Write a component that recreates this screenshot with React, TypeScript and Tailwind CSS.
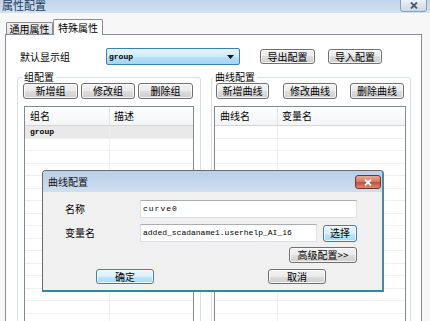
import React from 'react';

const mono = "font-['Liberation_Mono',monospace]";

function Btn({ label, w, h = 'h-[16px]', focus = false }: { label: string; w: string; h?: string; focus?: boolean }) {
  return (
    <div
      className={`${w} ${h} shrink-0 flex items-center justify-center rounded-[3px] border text-[10px] leading-none shadow-[inset_0_0_0_1px_rgba(255,255,255,0.75)] ${
        focus
          ? 'border-[#3c7fb1] bg-[linear-gradient(#eaf6fd,#d9f0fc_50%,#bee6fd_50%,#a7d9f5)]'
          : 'border-[#707070] bg-[linear-gradient(#f2f2f2,#ebebeb_50%,#dddddd_50%,#cfcfcf)]'
      }`}
    >
      {label}
    </div>
  );
}

function Table({ width, col, head1, head2, first }: { width: string; col: string; head1: string; head2: string; first?: string }) {
  const rows = Array.from({ length: 16 });
  return (
    <div className={`${width} h-[230px] overflow-hidden border border-[#828790] bg-white`}>
      <div className="flex h-[19px] border-b border-[#d5d5d5] bg-[linear-gradient(#ffffff,#f3f4f6)]">
        <div className={`${col} flex items-center border-r border-[#e5e5e5] pl-[5px]`}>{head1}</div>
        <div className="flex items-center pl-[4px]">{head2}</div>
      </div>
      {rows.map((_, i) => (
        <div key={i} className={`flex h-[12.5px] border-b border-[#f0f0f0] ${i === 0 && first ? 'bg-[#e9e9e9]' : ''}`}>
          <div className={`${col} flex items-center border-r border-[#f0f0f0] pl-[5px]`}>
            {i === 0 && first ? <span className={`${mono} text-[8px] font-bold`}>{first}</span> : null}
          </div>
        </div>
      ))}
    </div>
  );
}

function XIcon({ color, size = 8 }: { color: string; size?: number }) {
  return (
    <svg width={size} height={size - 1} viewBox="0 0 8 7">
      <path d="M1 0.5L7 6.5M7 0.5L1 6.5" stroke={color} strokeWidth="1.8" />
    </svg>
  );
}

export default function App() {
  return (
    <div className="relative w-[430px] h-[321px] overflow-hidden bg-[#f7f7f7] font-['Noto_Sans_CJK_SC',sans-serif] text-[10px] leading-none text-black">
      {/* window title */}
      <div className="flex h-[13px] items-start justify-between bg-[linear-gradient(#c0d4ea,#d4e2f1)]">
        <span className="ml-[2px] -mt-[1px] text-[11px] leading-[12px] text-[#1e3a5a]">属性配置</span>
        <div className="mr-[3px] -mt-[2px] flex h-[14px] w-[27px] items-center justify-center rounded-b-[3px] border border-[#8d9db2] bg-[linear-gradient(#eef3f9,#cbd8e7)]">
          <XIcon color="#4a5a70" />
        </div>
      </div>

      <div className="pl-[5px]">
        {/* tabs */}
        <div className="flex h-[21px] items-end pl-[1px]">
          <div className="flex h-[12px] w-[47px] items-center justify-center rounded-t-[2px] border border-b-0 border-[#898c95] bg-[linear-gradient(#f2f2f2,#e0e0e0)]">
            通用属性
          </div>
          <div className="relative z-10 -mb-px flex h-[16px] w-[50px] items-start justify-center rounded-t-[2px] border border-b-0 border-[#898c95] bg-white pt-[3px]">
            特殊属性
          </div>
        </div>

        {/* tab page */}
        <div className="h-[300px] w-[417px] border border-[#898c95] bg-white">
          <div className="mt-[13px] flex h-[17px] items-center pl-[14px]">
            <div className="w-[86px]">默认显示组</div>
            <div className="flex h-[17px] w-[134px] items-center justify-between rounded-[2px] border border-[#3c7fb1] bg-[linear-gradient(#e4f3fc,#cfeafb_50%,#b6e0fa_50%,#a4d6f4)] pl-[2px] pr-[5px]">
              <span className={`${mono} text-[8px] font-bold`}>group</span>
              <svg width="7" height="4" viewBox="0 0 7 4">
                <path d="M0 0H7L3.5 4Z" fill="#111" />
              </svg>
            </div>
            <div className="ml-[20px]">
              <Btn label="导出配置" w="w-[55px]" h="h-[15px]" />
            </div>
            <div className="ml-[13px]">
              <Btn label="导入配置" w="w-[54px]" h="h-[15px]" />
            </div>
          </div>

          <div className="mt-[7px] flex">
            <fieldset className="ml-[11px] h-[260px] w-[184px] rounded-[3px] border border-[#d5dfe5]">
              <legend className="ml-[4px] px-[2px] leading-[10px]">组配置</legend>
              <div className="mt-[1px] flex gap-[3px] pl-[5px]">
                <Btn label="新增组" w="w-[55px]" />
                <Btn label="修改组" w="w-[54px]" />
                <Btn label="删除组" w="w-[55px]" />
              </div>
              <div className="mt-[7px] ml-[6px]">
                <Table width="w-[170px]" col="w-[85px]" head1="组名" head2="描述" first="group" />
              </div>
            </fieldset>

            <fieldset className="ml-[10px] h-[260px] w-[200px] rounded-[3px] border border-[#d5dfe5]">
              <legend className="ml-[1px] px-[2px] leading-[10px]">曲线配置</legend>
              <div className="mt-[1px] flex pl-[4px]">
                <Btn label="新增曲线" w="w-[53px]" />
                <div className="ml-[14px]">
                  <Btn label="修改曲线" w="w-[54px]" />
                </div>
                <div className="ml-[13px]">
                  <Btn label="删除曲线" w="w-[54px]" />
                </div>
              </div>
              <div className="mt-[7px] ml-[2px]">
                <Table width="w-[192px]" col="w-[63px]" head1="曲线名" head2="变量名" />
              </div>
            </fieldset>
          </div>
        </div>
      </div>

      {/* curve dialog */}
      <div className="absolute left-[42px] top-[170px] z-20 flex h-[122px] w-[342px] flex-col rounded-t-[4px] border-l border-t border-r-2 border-b-2 border-l-[#6b6b6b] border-t-[#6b6b6b] border-r-[#4b8aa6] border-b-[#2f8a9c] bg-[#f0f0f0]">
        <div className="flex h-[21px] shrink-0 items-start justify-between rounded-t-[3px] bg-[linear-gradient(#b9d0e9,#cfdef0)]">
          <span className="mt-[6px] ml-[5px] text-[10px] text-[#111]">曲线配置</span>
          <div className="mt-[4px] mr-[1px] flex h-[14px] w-[26px] items-center justify-center rounded-[3px] border border-[#7a3328] bg-[linear-gradient(#e9a898,#d3745f_50%,#c24b37_50%,#d98a74)]">
            <XIcon color="#ffffff" />
          </div>
        </div>

        <div className="pl-[22px] pt-[8px]">
          <div className="flex h-[18px] items-center">
            <div className="w-[75px]">名称</div>
            <div className="flex h-[18px] w-[217px] items-center border border-[#dbdfe6] border-t-[#abadb3] bg-white pl-[2px]">
              <span className={`${mono} text-[8px] tracking-[1px]`}>curve0</span>
            </div>
          </div>
          <div className="mt-[6px] flex h-[18px] items-center">
            <div className="w-[75px]">变量名</div>
            <div className="flex h-[18px] w-[177px] items-center border border-[#dbdfe6] border-t-[#abadb3] bg-white pl-[2px]">
              <span className={`${mono} text-[8px]`}>added_scadaname1.userhelp_AI_16</span>
            </div>
            <div className="ml-[6px]">
              <Btn label="选择" w="w-[34px]" h="h-[17px]" focus />
            </div>
          </div>
          <div className="mt-[5px] flex pl-[224px]">
            <Btn label="高级配置>>" w="w-[68px]" />
          </div>
          <div className="mt-[6px] flex">
            <div className="ml-[31px]">
              <Btn label="确定" w="w-[58px]" h="h-[15px]" focus />
            </div>
            <div className="ml-[114px]">
              <Btn label="取消" w="w-[58px]" h="h-[15px]" />
            </div>
          </div>
        </div>
      </div>
    </div>
  );
}
